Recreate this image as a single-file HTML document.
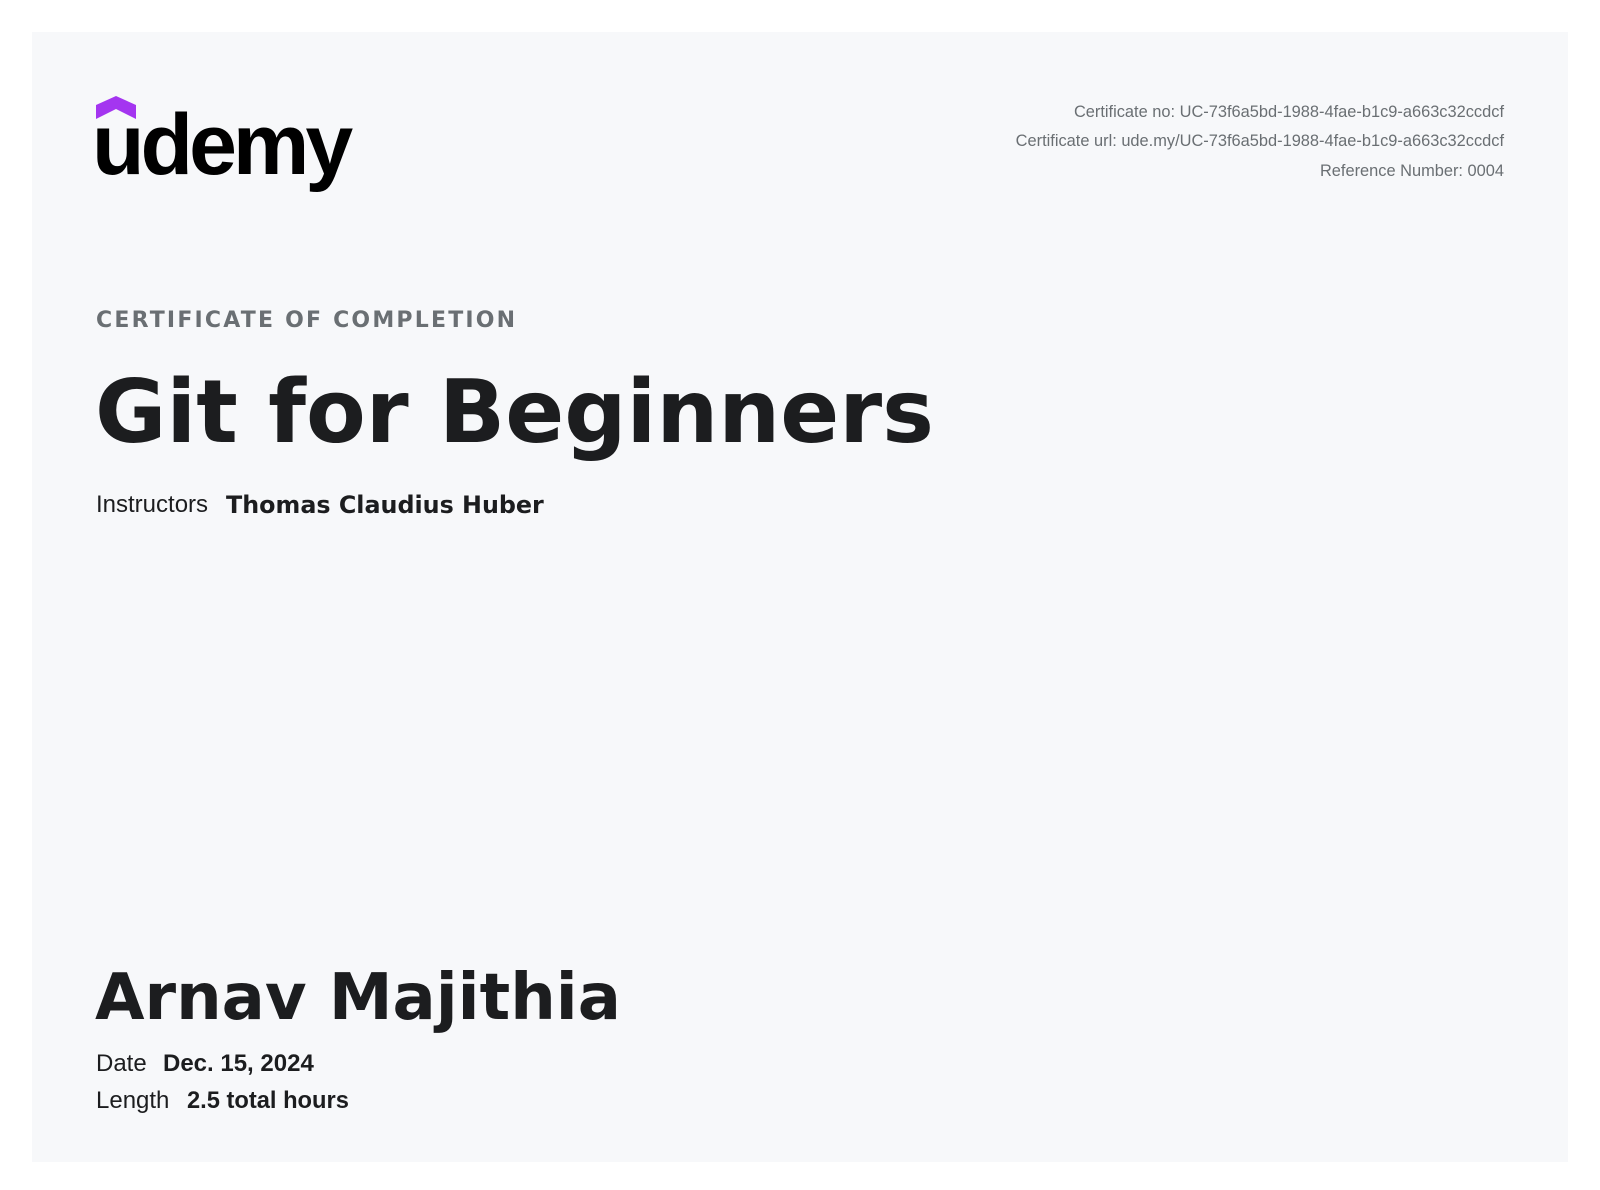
<!DOCTYPE html>
<html><head><meta charset="utf-8"><style>
html,body{margin:0;padding:0;background:#fff;width:1600px;height:1190px;overflow:hidden}
.card{position:absolute;left:32px;top:32px;width:1536px;height:1130px;background:#f7f8fa}
.a{position:absolute;white-space:nowrap}
.dj{font-family:"DejaVu Sans",sans-serif;font-weight:bold;color:#1c1d1f}
.lib{font-family:"Liberation Sans",sans-serif;color:#1c1d1f}
.meta{font-family:"Liberation Sans",sans-serif;font-size:16.4px;color:#6a6f73;right:96px;text-align:right;line-height:18px}
</style></head><body>
<div class="card"></div>
<svg class="a" style="left:96px;top:96px" width="42" height="24" viewBox="0 0 42 24"><polygon points="0,9 20,0 40,9 40,23 20,13 0,23" fill="#a435f0"/></svg>
<div class="a" style="left:92px;top:95px;font-family:'Liberation Sans',sans-serif;font-weight:bold;font-size:86px;letter-spacing:-4px;color:#000;line-height:100px">udemy</div>
<div class="a meta" style="top:103px">Certificate no: UC-73f6a5bd-1988-4fae-b1c9-a663c32ccdcf</div>
<div class="a meta" style="top:132px">Certificate url: ude.my/UC-73f6a5bd-1988-4fae-b1c9-a663c32ccdcf</div>
<div class="a meta" style="top:162px">Reference Number: 0004</div>
<div class="a dj" style="left:96px;top:307px;font-size:22px;letter-spacing:2.2px;color:#6a6f73;line-height:28px">CERTIFICATE OF COMPLETION</div>
<div class="a dj" style="left:95px;top:357px;font-size:87px;line-height:110px">Git for Beginners</div>
<div class="a lib" style="left:96px;top:491px;font-size:24px;line-height:28px">Instructors</div>
<div class="a dj" style="left:226px;top:491px;font-size:23.8px;line-height:28px">Thomas Claudius Huber</div>
<div class="a dj" style="left:95px;top:958px;font-size:64px;line-height:80px">Arnav Majithia</div>
<div class="a lib" style="left:96px;top:1050px;font-size:24px;line-height:28px">Date</div>
<div class="a lib" style="left:163px;top:1050px;font-size:24px;line-height:28px;font-weight:bold">Dec. 15, 2024</div>
<div class="a lib" style="left:96px;top:1087px;font-size:24px;line-height:28px">Length</div>
<div class="a lib" style="left:187px;top:1087px;font-size:23.7px;line-height:28px;font-weight:bold">2.5 total hours</div>
</body></html>
